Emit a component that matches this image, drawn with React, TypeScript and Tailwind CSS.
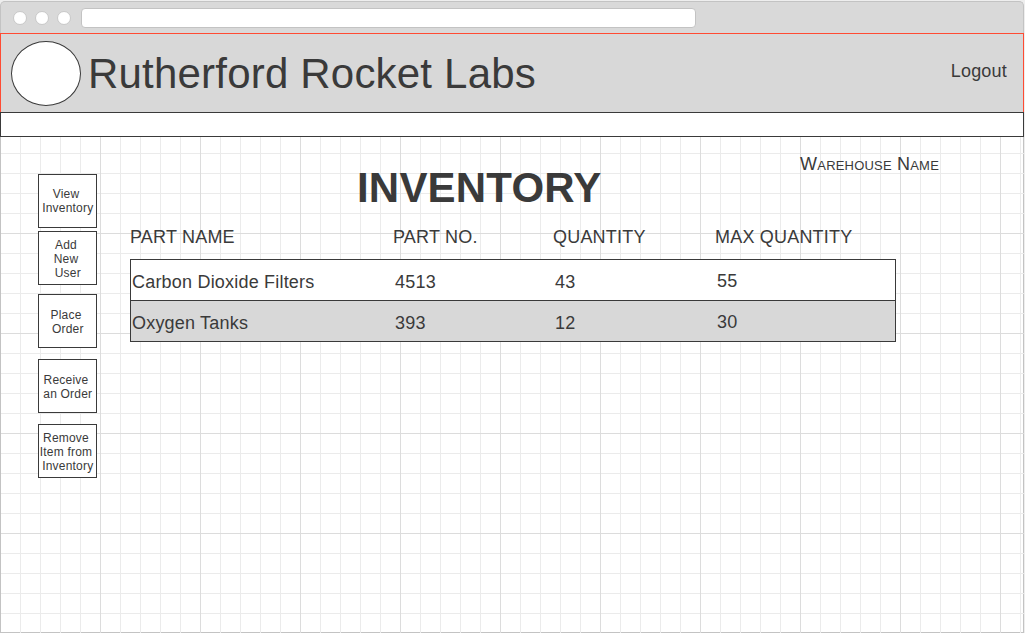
import type { ReactNode } from "react";

const actions = [
  { lines: ["View", "Inventory"], spacing: "mt-[37px]" },
  { lines: ["Add", "New", "User"], spacing: "mt-[3px] pt-[2px]" },
  { lines: ["Place", "Order"], spacing: "mt-[9px] pt-[2px]" },
  { lines: ["Receive", "an Order"], spacing: "mt-[11px] pt-[2px]" },
  { lines: ["Remove", "Item from", "Inventory"], spacing: "mt-[11px] pt-[2px]" },
];

const rows = [
  { cells: ["Carbon Dioxide Filters", "4513", "43", "55"], tone: "bg-white border-t" },
  { cells: ["Oxygen Tanks", "393", "12", "30"], tone: "bg-[#d8d8d8]" },
];

function Dot() {
  return <span className="size-[14px] rounded-full border border-[#c8c8c8] bg-white" />;
}

function BrowserBar() {
  return (
    <div className="flex h-8 items-center rounded-t-[5px] border-x border-t border-[#c3c3c3] bg-[#d9d9d9] pl-3">
      <div className="flex gap-2">
        <Dot />
        <Dot />
        <Dot />
      </div>
      <div className="ml-[10px] h-5 w-[615px] rounded-[4px] border border-[#c3c3c3] bg-white" />
    </div>
  );
}

function ActionButton({ lines, spacing }: { lines: string[]; spacing: string }) {
  return (
    <button
      className={`${spacing} flex h-[54px] w-[59px] flex-col items-center justify-center border border-[#3a3a3a] bg-white pr-[3px] text-[12px] leading-[14px] tracking-[0.2px] whitespace-pre`}
    >
      {lines.map((line, i) => (
        <span key={line}>{i < lines.length - 1 ? line : ` ${line}`}</span>
      ))}
    </button>
  );
}

function Columns({ children }: { children: ReactNode }) {
  return (
    <div className="grid grid-cols-[263px_160px_162px_1fr] text-[18px] leading-[22px] whitespace-nowrap">
      {children}
    </div>
  );
}

export default function App() {
  return (
    <div className="h-[633px] w-[1025px] overflow-hidden bg-[#eeeeee] pt-px font-['Liberation_Sans',Arial,sans-serif] tracking-[0.2px] text-[#3a3a3a]">
      <div className="flex h-[632px] w-[1024px] flex-col">
        <BrowserBar />
        <header className="flex h-[79px] shrink-0 items-center border-x border-t border-[#ff4b33] bg-[#d8d8d8] pr-4 pl-[10px]">
          <div className="h-[65px] w-[70px] rounded-[50%] border border-[#3a3a3a] bg-white" />
          <h1 className="mt-[2px] ml-[7px] text-[42px] leading-[48px] whitespace-nowrap">Rutherford Rocket Labs</h1>
          <a className="mb-1 ml-auto text-[18px] leading-[22px]">Logout</a>
        </header>
        <nav className="h-[25px] shrink-0 border border-[#3a3a3a] bg-white" />
        <main className="flex grow border-l border-[#c3c3c3] bg-white bg-[linear-gradient(to_right,#dcdcdc_1px,transparent_1px),linear-gradient(#dcdcdc_1px,transparent_1px),linear-gradient(to_right,#ebebeb_1px,transparent_1px),linear-gradient(#ebebeb_1px,transparent_1px),linear-gradient(to_left,#c3c3c3_1px,transparent_1px),linear-gradient(to_top,#c3c3c3_1px,transparent_1px)] bg-[size:100px_100px,100px_100px,20px_20px,20px_20px,100%_100%,100%_100%] bg-[position:-1px_96px,-1px_96px,-1px_16px,-1px_16px,0_0,0_0]">
          <aside className="ml-[37px] flex flex-col">
            {actions.map((a) => (
              <ActionButton key={a.lines.join(" ")} {...a} />
            ))}
          </aside>
          <section className="ml-[33px] flex w-[820px] flex-col">
            <div className="mt-4 flex h-[73px]">
              <h2 className="mt-[11px] ml-[227px] text-[42px] leading-[48px] font-bold">INVENTORY</h2>
              <p className="mr-[11px] ml-auto text-[18px] leading-[22px] [font-variant:small-caps]">Warehouse Name</p>
            </div>
            <Columns>
              <span>PART NAME</span>
              <span>PART NO.</span>
              <span>QUANTITY</span>
              <span>MAX QUANTITY</span>
            </Columns>
            <div className="mt-[11px] w-[766px]">
              {rows.map((r) => (
                <div key={r.cells[0]} className={`${r.tone} border-x border-b border-[#3a3a3a] pt-[11px] pb-[7px] pl-px`}>
                  <Columns>
                    {r.cells.map((c) => (
                      <span key={c} className="last:-mt-px">{c}</span>
                    ))}
                  </Columns>
                </div>
              ))}
            </div>
          </section>
        </main>
      </div>
    </div>
  );
}
